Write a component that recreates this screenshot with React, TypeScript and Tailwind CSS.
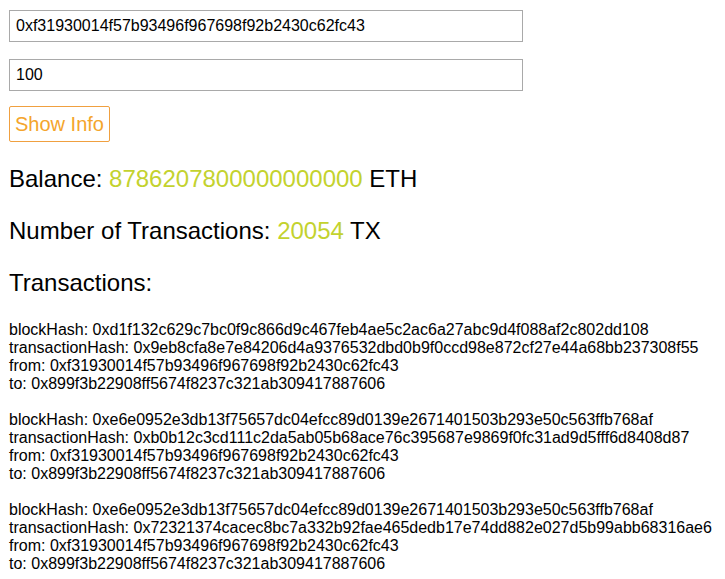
import React from "react";

const txs = [
  {
    blockHash: "0xd1f132c629c7bc0f9c866d9c467feb4ae5c2ac6a27abc9d4f088af2c802dd108",
    transactionHash: "0x9eb8cfa8e7e84206d4a9376532dbd0b9f0ccd98e872cf27e44a68bb237308f55",
    from: "0xf31930014f57b93496f967698f92b2430c62fc43",
    to: "0x899f3b22908ff5674f8237c321ab309417887606",
  },
  {
    blockHash: "0xe6e0952e3db13f75657dc04efcc89d0139e2671401503b293e50c563ffb768af",
    transactionHash: "0xb0b12c3cd111c2da5ab05b68ace76c395687e9869f0fc31ad9d5fff6d8408d87",
    from: "0xf31930014f57b93496f967698f92b2430c62fc43",
    to: "0x899f3b22908ff5674f8237c321ab309417887606",
  },
  {
    blockHash: "0xe6e0952e3db13f75657dc04efcc89d0139e2671401503b293e50c563ffb768af",
    transactionHash: "0x72321374cacec8bc7a332b92fae465dedb17e74dd882e027d5b99abb68316ae6",
    from: "0xf31930014f57b93496f967698f92b2430c62fc43",
    to: "0x899f3b22908ff5674f8237c321ab309417887606",
  },
];

export default function App() {
  return (
    <div
      className="min-h-[579px] bg-white text-black px-[9px] pt-[10px]"
      style={{ fontFamily: '"Liberation Sans", Arial, sans-serif' }}
    >
      <div className="flex flex-col items-start">
        <input
          readOnly
          value="0xf31930014f57b93496f967698f92b2430c62fc43"
          className="w-[514px] h-[32px] border border-[#a9a9a9] px-[6px] text-[16px] text-black outline-none"
        />
        <input
          readOnly
          value="100"
          className="mt-[17px] w-[514px] h-[32px] border border-[#a9a9a9] px-[6px] text-[16px] text-black outline-none"
        />
        <button className="mt-[15px] h-[36px] w-[101px] border border-[#f0a040] rounded-[2px] text-[20px] leading-[22px] text-[#f4a52c] bg-white">
          Show Info
        </button>
      </div>
      <div className="mt-[23px] text-[24px] leading-[28px]">
        Balance: <span className="text-[#c3d22e]">8786207800000000000</span> ETH
      </div>
      <div className="mt-[24px] text-[24px] leading-[28px]">
        Number of Transactions: <span className="text-[#c3d22e]">20054</span> TX
      </div>
      <div className="mt-[24px] text-[24px] leading-[28px]">Transactions:</div>
      <div className="mt-[24px] flex flex-col gap-[18px] text-[16px] leading-[18px] whitespace-nowrap">
        {txs.map((t, i) => (
          <div key={i}>
            <div>blockHash: {t.blockHash}</div>
            <div>transactionHash: {t.transactionHash}</div>
            <div>from: {t.from}</div>
            <div>to: {t.to}</div>
          </div>
        ))}
      </div>
    </div>
  );
}
